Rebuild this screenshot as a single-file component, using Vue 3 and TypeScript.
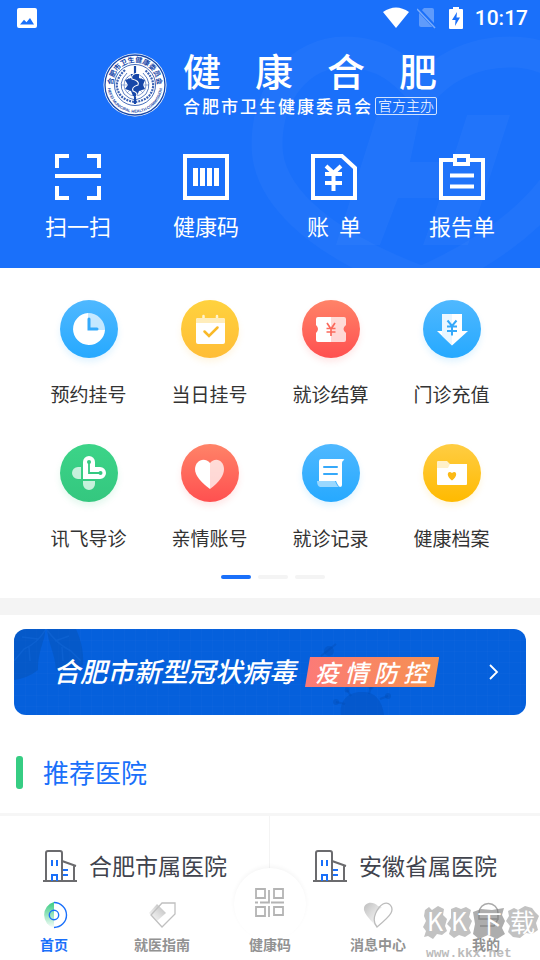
<script setup lang="ts">
import { ref } from 'vue'

interface Entry {
  id: string
  label: string
}

const brandTitle: string[] = Array.from('健康合肥')
const brandOwner: string[] = Array.from('合肥市卫生健康委员会')

const quickActions: Entry[] = [
  { id: 'scan', label: '扫一扫' },
  { id: 'code', label: '健康码' },
  { id: 'bill', label: '账\u00a0\u00a0单' },
  { id: 'report', label: '报告单' },
]

const services: (Entry & { tone: string })[] = [
  { id: 'reserve', label: '预约挂号', tone: 'blue' },
  { id: 'today', label: '当日挂号', tone: 'yellow' },
  { id: 'settle', label: '就诊结算', tone: 'red' },
  { id: 'recharge', label: '门诊充值', tone: 'blue' },
  { id: 'guide', label: '讯飞导诊', tone: 'green' },
  { id: 'family', label: '亲情账号', tone: 'red' },
  { id: 'record', label: '就诊记录', tone: 'blue' },
  { id: 'archive', label: '健康档案', tone: 'gold' },
]

const hospitals: string[] = ['合肥市属医院', '安徽省属医院']

const tabs: Entry[] = [
  { id: 'home', label: '首页' },
  { id: 'manual', label: '就医指南' },
  { id: 'qr', label: '健康码' },
  { id: 'message', label: '消息中心' },
  { id: 'mine', label: '我的' },
]

const activeTab = ref('home')
const activePage = ref(0)
</script>

<template>
  <div class="app">
    <header class="hero">
      <svg class="hero-art" viewBox="0 0 300 268" aria-hidden="true">
        <g fill="none" stroke="#fff" stroke-opacity=".03" stroke-width="31">
          <path d="M182 282C70 240 27 190 27 145C27 92 60 52 105 52C145 52 166 74 182 92C200 70 230 52 270 52C310 52 330 70 340 100C350 150 310 225 182 282Z" />
        </g>
        <path d="M227 115H270L228 245H183L200 198H158L140 245H96L137 115H180L170 162H212Z" fill="#fff" fill-opacity=".03" />
      </svg>

      <div class="status">
        <svg class="status-photo" width="20" height="20" viewBox="0 0 20 20" aria-hidden="true">
          <path fill-rule="evenodd" d="M2 0H18Q20 0 20 2V18Q20 20 18 20H2Q0 20 0 18V2Q0 0 2 0ZM3 16.500H17L13 10L9.500 14.300L7 11.800Z" fill="#fff" />
        </svg>
        <div class="status-right">
          <svg width="26" height="22" viewBox="0 0 26 22" aria-hidden="true">
            <path d="M0 5Q13-4 26 5L13 21Z" fill="#fff" />
          </svg>
          <svg width="20" height="22" viewBox="0 0 20 22" aria-hidden="true">
            <path d="M7 1H15Q17 1 17 3V18Q17 20 15 20H4Q2 20 2 18V6Z" fill="#fff" fill-opacity=".3" />
            <path d="M1 2L19 21" stroke="#1a70fa" stroke-width="4" />
            <path d="M0 2L18 21" stroke="#fff" stroke-opacity=".42" stroke-width="1.500" />
          </svg>
          <svg width="14" height="22" viewBox="0 0 14 22" aria-hidden="true">
            <path d="M4 0H10V2H13Q14 2 14 3V21Q14 22 13 22H1Q0 22 0 21V3Q0 2 1 2H4Z" fill="#fff" />
            <path d="M8 5L3 13H6.500L6 19L11 10.500H7.500Z" fill="#1a70fa" />
          </svg>
          <time class="clock">10:17</time>
        </div>
      </div>

      <div class="brand">
        <svg class="emblem" viewBox="0 0 64 64" aria-hidden="true">
          <defs>
            <path id="emblem-top" d="M10.500 36A22 22 0 1 1 53.500 36" />
            <path id="emblem-bottom" d="M4.900 29A27.300 27.300 0 1 0 59.100 29" />
          </defs>
          <circle cx="32" cy="32" r="31.500" fill="#fff" />
          <circle cx="32" cy="32" r="30" fill="#fff" stroke="#1747a8" stroke-width="1.300" />
          <circle cx="32" cy="32" r="20.500" fill="#fff" stroke="#1747a8" stroke-width=".8" />
          <text class="emblem-cn"><textPath href="#emblem-top" startOffset="50%" text-anchor="middle">合肥市卫生健康委员会</textPath></text>
          <text class="emblem-en"><textPath href="#emblem-bottom" startOffset="50%" text-anchor="middle">HEFEI MUNICIPAL HEALTH COMMISSION</textPath></text>
          <g fill="none" stroke="#1747a8">
            <path d="M22 17Q8 30 18 43Q23 48 32 49Q41 48 46 43Q56 30 42 17" stroke-width="2.200" stroke-dasharray="2 1" stroke-opacity=".85" />
            <path d="M24 20Q14 30 21 41Q26 46 32 47Q38 46 43 41Q50 30 40 20" stroke-width=".7" />
            <circle cx="32" cy="32" r="11" stroke-width=".5" />
            <path d="M18 32H46M24 24L40 40M40 24L24 40" stroke-width=".4" />
          </g>
          <path d="M28 21H36V25L42 27L40 32L42 36L36 38L34 43H30L28 38L22 36L25 32L22 27L28 25Z" fill="#1747a8" />
          <path d="M32 13V51" stroke="#1747a8" stroke-width="2.200" />
          <path d="M34 20Q27 22 29 26Q37 28 35 32Q28 34 30 38Q36 40 33 44" fill="none" stroke="#fff" stroke-width="1.100" />
        </svg>
        <div class="brand-text">
          <h1 class="brand-title"><span v-for="(ch, i) in brandTitle" :key="i">{{ ch }}</span></h1>
          <div class="brand-sub">
            <p class="brand-owner"><span v-for="(ch, i) in brandOwner" :key="i">{{ ch }}</span></p>
            <span class="badge">官方主办</span>
          </div>
        </div>
      </div>

      <nav class="quick">
        <button v-for="a in quickActions" :key="a.id" type="button" class="quick-item">
          <svg width="46" height="46" viewBox="0 0 46 46" fill="none" stroke="#fff" stroke-width="4" aria-hidden="true">
            <path v-if="a.id === 'scan'" d="M2 14V2H14M32 2H44V14M44 32V44H32M14 44H2V32M0 22H46" />
            <template v-else-if="a.id === 'code'">
              <path d="M2 2H44V44H2Z" />
              <path d="M12.500 14V32M19.500 14V32M26.500 14V32M33.500 14V32" stroke-width="5" />
            </template>
            <template v-else-if="a.id === 'bill'">
              <path d="M2 2H31L44 14V44H2Z" />
              <path d="M15 12L22.500 19L30 12M22.500 18V37M14 20H31M14 29H31" />
            </template>
            <template v-else>
              <path d="M16 6H2V44H44V6H29M16 2H29V10H16Z" />
              <path d="M11 21.500H35M11 32.500H35" />
            </template>
          </svg>
          <span>{{ a.label }}</span>
        </button>
      </nav>
    </header>

    <section class="services">
      <div class="service-grid">
        <button v-for="s in services" :key="s.id" type="button" class="service">
          <span class="disc" :class="s.tone">
            <svg width="58" height="58" viewBox="0 0 58 58" fill="none" aria-hidden="true">
              <template v-if="s.id === 'reserve'">
                <path d="M28 13A16 16 0 1 0 45 30H28Z" fill="#fff" />
                <path d="M28 13A17 17 0 0 1 45 30H28Z" fill="#fff" fill-opacity=".7" />
                <path d="M29 19V29H37" stroke="#34aafc" stroke-width="3" stroke-linecap="round" />
              </template>
              <template v-else-if="s.id === 'today'">
                <path d="M22.500 16V20M36 16V20" stroke="#fff3cf" stroke-width="2.500" stroke-linecap="round" />
                <rect x="15" y="18" width="29" height="26" rx="2" fill="#fff" />
                <path d="M15 23V20Q15 18 17 18H42Q44 18 44 20V23Z" fill="#ffedbb" />
                <path d="M23.500 31.500L28 36L36.500 27.500" stroke="#f9b928" stroke-width="2.500" stroke-linecap="round" />
              </template>
              <template v-else-if="s.id === 'settle'">
                <path d="M29 17H16Q14 17 14 19V25Q18 29 14 33V40Q14 42 16 42H29Z" fill="#fff" />
                <path d="M29 17H42Q44 17 44 19V25Q39 29 44 33V40Q44 42 42 42H29Z" fill="#fff" fill-opacity=".75" />
                <path d="M25 23L29 29L33 23M29 29V36M24.500 28.500H33.500M24.500 32H33.500" stroke="#fb6a5c" stroke-width="1.700" />
              </template>
              <template v-else-if="s.id === 'recharge'">
                <path d="M19 14H39V31H45L29 45.500L14 31H19Z" fill="#fff" />
                <path d="M19 14H29V45.500L19 36Z" fill="#d8efff" fill-opacity=".55" />
                <path d="M24.500 20.500L29 26L33.500 20.500M29 26V35.500M24 26.500H34M24 31H34" stroke="#36a9fa" stroke-width="2" />
              </template>
              <template v-else-if="s.id === 'guide'">
                <path d="M21 23H18A6 6 0 0 0 18 35H21ZM23 37H35V40A6 6 0 0 1 23 40Z" fill="#fff" fill-opacity=".72" />
                <path d="M23 35V18A6 6 0 0 1 35 18V23H40A6 6 0 0 1 40 35Z" fill="#fff" />
                <path d="M29 18V29H40" stroke="#35c981" stroke-width="1.800" />
                <circle cx="29" cy="18" r="2" fill="#35c981" /><circle cx="40.500" cy="29" r="2" fill="#35c981" />
              </template>
              <template v-else-if="s.id === 'family'">
                <path d="M29 19C23 12 14 17 14 25C14 32 20 38 29 45Z" fill="#fff" />
                <path d="M29 19C35 12 43 17 43 25C43 32 38 38 29 45Z" fill="#fff" fill-opacity=".75" />
              </template>
              <template v-else-if="s.id === 'record'">
                <path d="M19 15H40Q43 15 42 16Q40 17 40 19V41Q40 43 38 43Q36 42 34 37H17V18Q17 15 19 15Z" fill="#fff" />
                <path d="M15 37H33Q35 42 37 43H18Q15 42 15 37Z" fill="#9ad8ff" />
                <path d="M22 23H35M22 30H35" stroke="#36a9fa" stroke-width="2" stroke-linecap="round" />
              </template>
              <template v-else>
                <path d="M14 18Q14 17 15 17H24L27 20H43Q44 20 44 21V26H14Z" fill="#fff" fill-opacity=".75" />
                <path d="M14 24H25L27 20H44V40Q44 41 43 41H15Q14 41 14 40Z" fill="#fff" />
                <path d="M29 36.500C22 31.500 25 25.500 29 29C33 25.500 36 31.500 29 36.500Z" fill="#fbb915" />
              </template>
            </svg>
          </span>
          <span>{{ s.label }}</span>
        </button>
      </div>
      <div class="pager">
        <button
          v-for="n in 3"
          :key="n"
          type="button"
          class="dot"
          :class="{ on: activePage === n - 1 }"
          :aria-label="`第${n}页`"
          @click="activePage = n - 1"
        ></button>
      </div>
    </section>

    <div class="band"></div>

    <a class="banner" href="#">
      <svg class="banner-art" viewBox="0 0 512 86" preserveAspectRatio="xMinYMin slice" aria-hidden="true">
        <path d="M0 0H31C32 10 24 20 24 41Q14 49 0 51ZM33 0H62C67 11 70 23 69 36Q60 43 42 41C41 24 34 14 33 0Z" fill="#064da7" fill-opacity=".35" />
        <path d="M32 0Q24 14 10 20L0 32M24 10L8 8M15 18L16 32M33 1Q43 15 57 22L67 32M41 12L55 7M48 18L49 32" fill="none" stroke="#1166d5" stroke-opacity=".6" stroke-width="1.500" />
        <g fill="#034db7" fill-opacity=".4">
          <path d="M327 86C325 72 334 63 347 63C360 62 368 70 370 86Z" />
          <circle cx="322" cy="73" r="3" /><circle cx="333" cy="61" r="2.500" /><circle cx="357" cy="58" r="2.500" /><circle cx="374" cy="67" r="3" />
          <circle cx="315" cy="22" r="5" />
        </g>
        <path d="M322 73L331 75M333 61L337 67M357 58L355 65M374 67L366 70M307 27L322 15" stroke="#034db7" stroke-opacity=".4" stroke-width="2" />
      </svg>
      <strong class="banner-title">合肥市新型冠状病毒</strong>
      <span class="banner-tag">疫 情 防 控</span>
      <svg class="banner-arrow" width="10" height="16" viewBox="0 0 10 16" fill="none" stroke="#fff" stroke-width="1.800" aria-hidden="true">
        <path d="M1 1L8 8L1 15" />
      </svg>
    </a>

    <h2 class="section-title">推荐医院</h2>

    <section class="hospitals">
      <a v-for="h in hospitals" :key="h" class="hospital" href="#">
        <svg width="34" height="34" viewBox="0 0 34 34" fill="none" stroke-width="2" aria-hidden="true">
          <path d="M0 31H34M3 31V3Q3 1 5 1H17Q19 1 19 3V31M19 11L33 16M31 16V31" stroke="#6b6b6e" />
          <path d="M9 10V16M14 10V16M9 31V25H14V31M20 20H25M20 25H25" stroke="#1a70fa" />
        </svg>
        <span>{{ h }}</span>
      </a>
    </section>

    <nav class="tabs">
      <button
        v-for="t in tabs"
        :key="t.id"
        type="button"
        class="tab"
        :class="{ active: activeTab === t.id, center: t.id === 'qr' }"
        @click="activeTab = t.id"
      >
        <span class="tab-icon">
          <svg v-if="t.id === 'home'" width="28" height="28" viewBox="0 0 28 28" fill="none" aria-hidden="true">
            <defs>
              <linearGradient id="home-fade" x2="0" y2="1"><stop stop-color="#39cb82" /><stop offset="1" stop-color="#39cb82" stop-opacity=".03" /></linearGradient>
            </defs>
            <path d="M14 1A13.500 13.500 0 0 0 14 27Z" fill="url(#home-fade)" />
            <path d="M14 1.500A12.500 12.500 0 0 1 14 26.500" stroke="#1a70fa" stroke-width="1.400" />
            <circle cx="14" cy="14" r="4.700" stroke="#1a70fa" stroke-width="1.400" />
          </svg>
          <svg v-else-if="t.id === 'manual'" width="28" height="28" viewBox="0 0 28 28" fill="none" aria-hidden="true">
            <defs>
              <linearGradient id="tag-fade" x1="1" y1="0" x2="0" y2="1"><stop stop-color="#b5b5b5" /><stop offset="1" stop-color="#ccc" stop-opacity=".1" /></linearGradient>
            </defs>
            <path d="M9 3L18 12L9 20L1 12Z" fill="url(#tag-fade)" />
            <path d="M14 2H27V13L14 26L3 14Z" stroke="#c0c0c0" stroke-width="1.300" />
          </svg>
          <svg v-else-if="t.id === 'qr'" width="32" height="32" viewBox="0 0 32 32" fill="none" stroke="#b4b4b4" stroke-width="1.800" aria-hidden="true">
            <path d="M2 1H11V10H2ZM20 1H29V10H20ZM2 19H11V28H2ZM20 19H29V27H20ZM1 14.500H4M6 14.500H15V2M15 29V18M17 14.500H30" />
          </svg>
          <svg v-else-if="t.id === 'message'" width="30" height="28" viewBox="0 0 30 28" fill="none" aria-hidden="true">
            <defs>
              <linearGradient id="heart-fade" x2="1" y2="1"><stop stop-color="#bcbcbc" /><stop offset="1" stop-color="#ddd" stop-opacity=".2" /></linearGradient>
            </defs>
            <path d="M15 5C9-1 0 2 1 9Q2 14 12 24Q9 13 19 6Z" fill="url(#heart-fade)" />
            <path d="M14 26C7 18 15 6 20 3C26 0 31 6 28 12C26 16 20 21 14 26Z" stroke="#bcbcbc" stroke-width="1.300" />
          </svg>
          <svg v-else width="28" height="28" viewBox="0 0 28 28" fill="none" aria-hidden="true">
            <path d="M7 12A9.500 9.500 0 0 1 26 12V18H7Z" stroke="#aaa" stroke-width="1.500" />
            <path d="M8 25H22L26 18" stroke="#aaa" stroke-width="1.500" />
          </svg>
        </span>
        <span class="tab-label">{{ t.label }}</span>
      </button>

      <svg class="watermark" width="120" height="56" viewBox="0 0 120 56">
        <g fill="#8f8f8f" fill-opacity=".55">
          <path d="M5 6L9 3L12 6L18 2L24 5L23 11L27 15L25 22L27 27L22 31L17 30L13 35L8 32L4 33L6 27L3 23L6 17L4 12Z" />
          <path d="M31 5L36 3L41 5L46 3L51 6L49 13L52 17L49 24L51 29L45 33L39 31L34 34L29 30L31 24L27 20L31 14Z" />
          <path d="M88 7L94 4L98 6L105 2L112 4L115 8L119 12L116 19L118 26L112 30L106 29L100 34L93 33L88 28L90 22L86 17L89 12Z" />
        </g>
        <path d="M53 8L61 5L72 6L84 4L82 11L85 17L82 24L85 30L77 35L68 31L59 35L53 30L55 20Z" fill="#777" fill-opacity=".6" />
        <g class="mark-name"><text x="7" y="27">K</text><text x="31" y="27">K</text><text x="57" y="29">下</text><text x="90" y="28">载</text></g>
        <text class="mark-url" x="6" y="53">www.kkx.net</text>
      </svg>
    </nav>
  </div>
</template>

<style>
body {
  margin: 0;
  background: #fff;
}
</style>

<style scoped>
.app {
  display: flex;
  flex-direction: column;
  min-height: 100vh;
  background: #fff;
  color: #333;
  font-family: "Noto Sans CJK SC", "Noto Sans", sans-serif;
}

button {
  padding: 0;
  border: 0;
  background: none;
  color: inherit;
  font: inherit;
  cursor: pointer;
}

a {
  color: inherit;
  text-decoration: none;
}

svg {
  display: block;
  flex: none;
}

h1,
h2,
p {
  margin: 0;
  font-weight: 400;
}

.hero {
  position: relative;
  overflow: hidden;
  padding-bottom: 28px;
  background: #1a70fa;
  color: #fff;
}

.hero-art {
  position: absolute;
  top: 0;
  right: 0;
  width: 300px;
  height: 268px;
}

.status,
.brand,
.quick {
  position: relative;
}

.status {
  display: flex;
  align-items: center;
  justify-content: space-between;
  height: 36px;
  padding: 0 12px 0 17px;
}

.status-right {
  display: flex;
  align-items: center;
  gap: 12px;
}

.status-right svg:nth-child(1) {
  margin-right: -4px;
}

.clock {
  font: 500 21px/36px Roboto, sans-serif;
}

.brand {
  display: flex;
  justify-content: center;
  gap: 16px;
  padding-top: 17px;
}

.emblem {
  width: 64px;
  height: 64px;
}

.emblem-cn {
  fill: #1747a8;
  font-size: 7px;
  font-weight: 700;
}

.emblem-en {
  fill: #1747a8;
  font: 700 4px "Liberation Sans", sans-serif;
}

.brand-text {
  width: 254px;
}

.brand-title {
  display: flex;
  justify-content: space-between;
  font-size: 38px;
  font-weight: 500;
  line-height: 34px;
}

.brand-sub {
  display: flex;
  align-items: center;
  justify-content: space-between;
  margin-top: 9px;
}

.brand-owner {
  display: flex;
  justify-content: space-between;
  width: 188px;
  font-size: 17px;
  font-weight: 500;
  line-height: 20px;
}

.badge {
  box-sizing: border-box;
  height: 18px;
  padding: 0 2px;
  border: 1px solid #ffffffcc;
  border-radius: 2px;
  font-size: 14px;
  font-weight: 300;
  line-height: 15px;
}

.quick {
  display: grid;
  grid-template-columns: repeat(4, 1fr);
  margin-top: 37px;
  padding: 0 14px;
}

.quick-item {
  display: flex;
  flex-direction: column;
  align-items: center;
  gap: 10px;
  font-size: 22px;
  line-height: 30px;
}

.services {
  padding: 32px 28px 19px;
}

.service-grid {
  display: grid;
  grid-template-columns: repeat(4, 1fr);
  row-gap: 36px;
}

.service {
  display: flex;
  flex-direction: column;
  align-items: center;
  gap: 22px;
  font-size: 19px;
  line-height: 28px;
}

.disc {
  border-radius: 50%;
}

.blue {
  background: linear-gradient(#4fb8ff, #26a9ff);
  box-shadow: 0 4px 6px #26a9ff22;
}

.yellow {
  background: linear-gradient(#ffd23e, #ffbd37);
  box-shadow: 0 4px 6px #ffbd3722;
}

.gold {
  background: linear-gradient(#ffcd43, #ffba00);
  box-shadow: 0 4px 6px #ffba0022;
}

.red {
  background: linear-gradient(#ff8368, #ff5050);
  box-shadow: 0 4px 6px #ff505022;
}

.green {
  background: linear-gradient(#3cd488, #34c77f);
  box-shadow: 0 4px 6px #34c77f22;
}

.pager {
  display: flex;
  justify-content: center;
  gap: 7px;
  margin-top: 23px;
  padding-left: 6px;
}

.dot {
  width: 30px;
  height: 4px;
  border-radius: 2px;
  background: #f4f4f4;
}

.dot.on {
  background: #1a70fa;
}

.band {
  height: 17px;
  background: #f4f4f4;
}

.banner {
  position: relative;
  display: flex;
  align-items: center;
  height: 86px;
  margin: 14px 14px 0;
  padding: 0 27px 0 39px;
  box-sizing: border-box;
  overflow: hidden;
  border-radius: 12px;
  background:
    repeating-linear-gradient(90deg, #ffffff04 0 1px, transparent 1px 11px),
    repeating-linear-gradient(#ffffff04 0 1px, transparent 1px 11px),
    #0560dc;
  color: #fff;
}

.banner-art {
  position: absolute;
  inset: 0;
  width: 100%;
  height: 100%;
}

.banner-title,
.banner-tag,
.banner-arrow {
  position: relative;
}

.banner-title {
  padding-bottom: 4px;
  font-size: 27px;
  font-style: italic;
  font-weight: 500;
  white-space: nowrap;
}

.banner-tag {
  margin-left: 9px;
  padding: 0 12px 0 10px;
  background: linear-gradient(90deg, #fc7a78, #f5924f);
  clip-path: polygon(5px 0, 100% 0, calc(100% - 5px) 100%, 0 100%);
  font-size: 24px;
  font-style: italic;
  font-weight: 500;
  line-height: 30px;
  white-space: nowrap;
}

.banner-arrow {
  margin-left: auto;
}

.section-title {
  display: flex;
  align-items: center;
  gap: 20px;
  margin: 39px 16px 23px;
  color: #1a70fa;
  font-size: 26px;
  line-height: 36px;
}

.section-title::before {
  content: "";
  width: 7px;
  height: 33px;
  border-radius: 3px;
  background: #36cd83;
}

.hospitals {
  display: grid;
  flex: 1;
  grid-template-columns: repeat(2, 1fr);
  border-top: 3px solid #f6f6f6;
}

.hospital {
  display: flex;
  align-items: flex-start;
  justify-content: center;
  gap: 12px;
  padding: 34px 0 6px;
  color: #40434d;
  font-size: 23px;
  line-height: 31px;
}

.hospital + .hospital {
  box-shadow: -1px 0 #f4f4f4;
}

.tabs {
  position: sticky;
  bottom: 0;
  display: grid;
  grid-template-columns: repeat(5, 1fr);
  height: 70px;
  background: #fff;
}

.tab {
  display: flex;
  flex-direction: column;
  align-items: center;
  justify-content: flex-end;
  gap: 5px;
  padding-bottom: 6px;
  color: #929292;
  font-size: 14px;
  font-weight: 700;
  line-height: 20px;
}

.tab.active {
  color: #1a70fa;
}

.tab-icon {
  position: relative;
  display: grid;
  place-items: center;
}

.center .tab-icon {
  flex: none;
  width: 72px;
  height: 72px;
  margin-top: -22px;
  margin-bottom: -11px;
  border-radius: 50%;
  background: #fff;
  box-shadow: 0 -2px 4px #0000000a;
}

.center .tab-label {
  position: relative;
}

.watermark {
  position: absolute;
  right: 0;
  bottom: 0;
  pointer-events: none;
}

.mark-name {
  fill: #fff;
  font-size: 25px;
}

.mark-url {
  fill: #bbb;
  font: 700 13px "Liberation Mono", monospace;
}
</style>
